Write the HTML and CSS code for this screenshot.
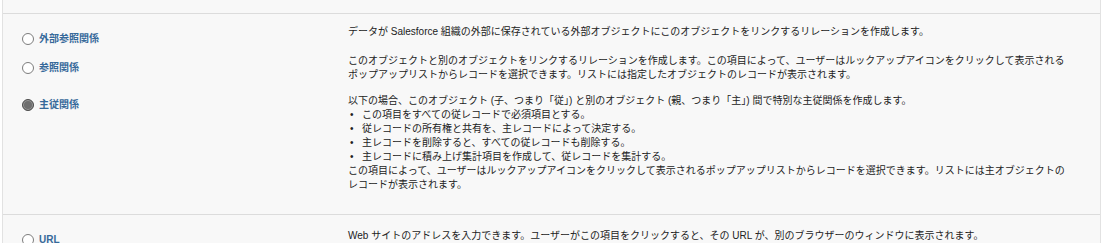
FILE: index.html
```html
<!DOCTYPE html>
<html lang="ja">
  <head>
    <meta charset="UTF-8" />
    <meta name="viewport" content="width=device-width, initial-scale=1.0" />
    <title>データ型</title>
    <link rel="stylesheet" href="styles.css">
  </head>
  <body>
    <div class="box">
      <div class="top"></div>
      <div class="group first">
        <div class="row r1">
          <label class="opt"><span class="radio"></span>外部参照関係</label>
          <div class="desc">データが Salesforce 組織の外部に保存されている外部オブジェクトにこのオブジェクトをリンクするリレーションを作成します。</div>
        </div>
        <div class="row r2">
          <label class="opt"><span class="radio"></span>参照関係</label>
          <div class="desc">このオブジェクトと別のオブジェクトをリンクするリレーションを作成します。この項目によって、ユーザーはルックアップアイコンをクリックして表示されるポップアップリストからレコードを選択できます。リストには指定したオブジェクトのレコードが表示されます。</div>
        </div>
        <div class="row r3">
          <label class="opt low"><span class="radio on"></span>主従関係</label>
          <div class="desc">
            以下の場合、このオブジェクト (子、つまり「従」) と別のオブジェクト (親、つまり「主」) 間で特別な主従関係を作成します。
            <ul>
              <li>この項目をすべての従レコードで必須項目とする。</li>
              <li>従レコードの所有権と共有を、主レコードによって決定する。</li>
              <li>主レコードを削除すると、すべての従レコードも削除する。</li>
              <li>主レコードに積み上げ集計項目を作成して、従レコードを集計する。</li>
            </ul>
            この項目によって、ユーザーはルックアップアイコンをクリックして表示されるポップアップリストからレコードを選択できます。リストには主オブジェクトのレコードが表示されます。
          </div>
        </div>
      </div>
      <div class="group">
        <div class="row">
          <label class="opt low"><span class="radio"></span>URL</label>
          <div class="desc">Web サイトのアドレスを入力できます。ユーザーがこの項目をクリックすると、その URL が、別のブラウザーのウィンドウに表示されます。</div>
        </div>
      </div>
    </div>
  </body>
</html>
```

FILE: styles.css
```css
body {
  margin: 0;
  background: #fff;
  font-family: "Liberation Sans", "Noto Sans CJK JP", sans-serif;
  font-size: 10px;
  line-height: 14px;
  color: #222;
}
.box {
  margin-left: 2px;
  width: 1097px;
  height: 243px;
  border-left: 1px solid #e2e2e2;
  border-right: 1px solid #e2e2e2;
  background: #f8f8f8;
}
.top {
  height: 13px;
  border-bottom: 1px solid #dcdcdc;
}
.group {
  border-bottom: 1px solid #dcdcdc;
  padding: 14px 0 0 0;
}
.group.first {
  padding: 11px 0 0 0;
  height: 189px;
}
.row {
  display: flex;
}
.r1 {
  margin-bottom: 8px;
}
.r2 {
  margin-bottom: 12px;
}
.opt {
  display: flex;
  align-items: center;
  width: 326px;
  padding-left: 19px;
  padding-top: 7px;
  height: 14px;
  font-weight: bold;
  color: #36699a;
}
.opt.low {
  padding-top: 4px;
}
.radio {
  width: 10px;
  height: 10px;
  border: 1px solid #7d7d7d;
  border-radius: 50%;
  background: #fff;
  margin-right: 5px;
  margin-top: -1px;
}
.radio.on {
  background: #6f6f6f;
  border-color: #4d4d4d;
  box-shadow: inset 0 0 0 1px #9a9a9a;
}
.desc {
  width: 726px;
}
ul {
  list-style: none;
  margin: 0;
  padding: 0;
}
li {
  padding-left: 14px;
  position: relative;
}
li::before {
  content: "\2022";
  position: absolute;
  left: 2px;
}
```
